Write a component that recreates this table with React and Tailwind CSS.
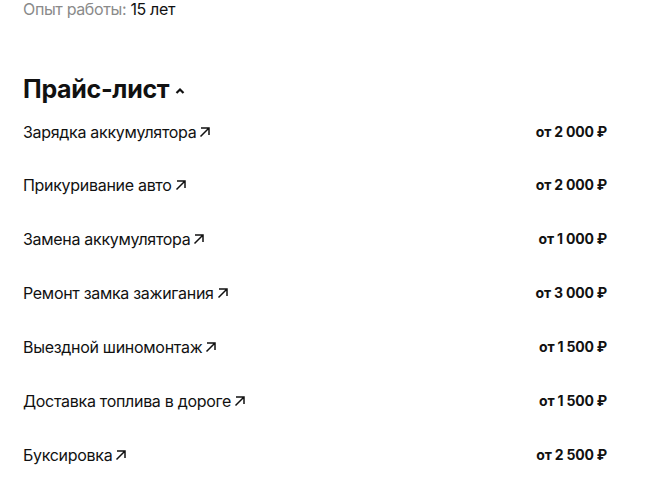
const items = [
  ["Зарядка аккумулятора", "от 2 000 ₽"],
  ["Прикуривание авто", "от 2 000 ₽"],
  ["Замена аккумулятора", "от 1 000 ₽"],
  ["Ремонт замка зажигания", "от 3 000 ₽"],
  ["Выездной шиномонтаж", "от 1 500 ₽"],
  ["Доставка топлива в дороге", "от 1 500 ₽"],
  ["Буксировка", "от 2 500 ₽"],
];

const Arrow = () => (
  <svg width="12" height="12" viewBox="0 0 12 12" className="ml-[3px] inline-block" fill="none" stroke="#111" strokeWidth="1.5">
    <path d="M1.5 10.5 L10 2 M2 2 H10 V9" />
  </svg>
);

export default function App() {
  return (
    <div className="min-h-screen bg-white text-[#111] font-['Inter',sans-serif] pl-[23px] pr-[42px]">
      <p className="text-[16px] leading-[20px] -mt-[1px] tracking-[-0.35px]">
        <span className="text-[#8a8a8a]">Опыт работы:</span> 15 лет
      </p>

      <h2 className="mt-[54px] flex items-center text-[25px] leading-[32px] font-bold tracking-[-0.3px]">
        Прайс-лист
        <svg width="12" height="12" viewBox="0 0 12 12" className="ml-[5px] mt-[3px]" fill="none" stroke="#111" strokeWidth="2.2">
          <path d="M2.5 8 L6 4.5 L9.5 8" />
        </svg>
      </h2>

      <ul className="mt-[17px]">
        {items.map(([name, price]) => (
          <li key={name} className="flex items-center justify-between h-[54px] first:h-[36px] first:items-start">
            <span className="flex items-center text-[16px] leading-[20px] tracking-[-0.3px]">
              {name}
              <Arrow />
            </span>
            <span className="text-[14px] font-bold leading-[20px] tracking-[-0.2px]">{price}</span>
          </li>
        ))}
      </ul>
    </div>
  );
}
